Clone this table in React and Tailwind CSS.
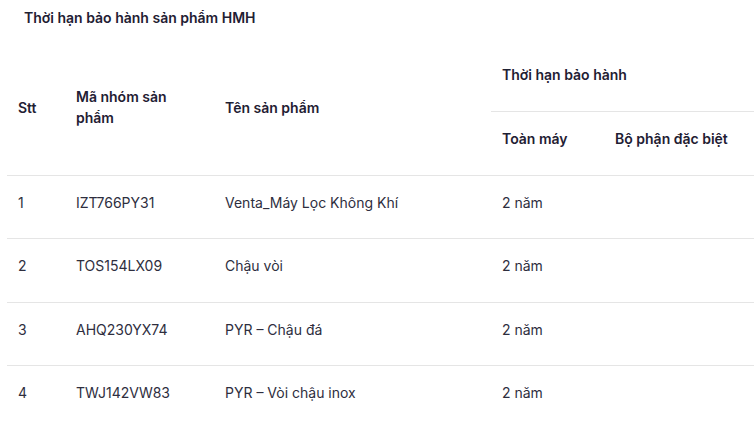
import React from "react";

const rows = [
  ["1", "IZT766PY31", "Venta_Máy Lọc Không Khí", "2 năm", ""],
  ["2", "TOS154LX09", "Chậu vòi", "2 năm", ""],
  ["3", "AHQ230YX74", "PYR – Chậu đá", "2 năm", ""],
  ["4", "TWJ142VW83", "PYR – Vòi chậu inox", "2 năm", ""],
];

const rowH = ["h-[63px]", "h-[64px]", "h-[63px]", "h-[63px]"];

export default function App() {
  return (
    <div
      className="w-[754px] h-[427px] overflow-hidden bg-white text-[#23233a]"
      style={{ fontFamily: "Inter, Roboto, 'Noto Sans', sans-serif" }}
    >
      <div className="pl-[24px] pt-[8px] text-[14px] leading-[20px] font-semibold text-[#1f2033]">
        Thời hạn bảo hành sản phẩm HMH
      </div>
      <div className="pl-[7px] mt-[20px]">
        <table className="border-collapse table-fixed w-[760px] text-[14px]">
          <colgroup>
            <col className="w-[58px]" />
            <col className="w-[149px]" />
            <col className="w-[277px]" />
            <col className="w-[113px]" />
            <col className="w-[163px]" />
          </colgroup>
          <thead className="text-[#1f2033] font-semibold">
            <tr>
              <th rowSpan={2} className="text-left align-middle px-[11px] pt-[17px] pb-[25px] leading-[21px] font-semibold border-b border-[#e5e5e5]">
                Stt
              </th>
              <th rowSpan={2} className="text-left align-middle px-[11px] pt-[17px] pb-[25px] leading-[21px] font-semibold border-b border-[#e5e5e5]">
                <div className="max-w-[105px]">Mã nhóm sản phẩm</div>
              </th>
              <th rowSpan={2} className="text-left align-middle px-[11px] pt-[17px] pb-[25px] leading-[21px] font-semibold border-b border-[#e5e5e5]">
                Tên sản phẩm
              </th>
              <th colSpan={2} className="text-left h-[63px] px-[11px] pt-[17px] pb-[25px] align-top leading-[20px] font-semibold border-b border-[#e5e5e5]">
                Thời hạn bảo hành
              </th>
            </tr>
            <tr>
              <th className="text-left h-[64px] px-[11px] pt-[17px] pb-[25px] align-top leading-[20px] font-semibold border-b border-[#e5e5e5]">
                Toàn máy
              </th>
              <th className="text-left h-[64px] px-[11px] pt-[17px] pb-[25px] align-top leading-[20px] font-semibold border-b border-[#e5e5e5] whitespace-nowrap">
                Bộ phận đặc biệt
              </th>
            </tr>
          </thead>
          <tbody className="text-[#2e2e3e]">
            {rows.map((r, i) => (
              <tr key={i} className={i < rows.length - 1 ? "border-b border-[#e5e5e5]" : ""}>
                {r.map((c, j) => (
                  <td key={j} className={`${rowH[i]} px-[11px] pt-[17px] pb-[25px] align-top leading-[20px] whitespace-nowrap`}>
                    {c}
                  </td>
                ))}
              </tr>
            ))}
          </tbody>
        </table>
      </div>
    </div>
  );
}
